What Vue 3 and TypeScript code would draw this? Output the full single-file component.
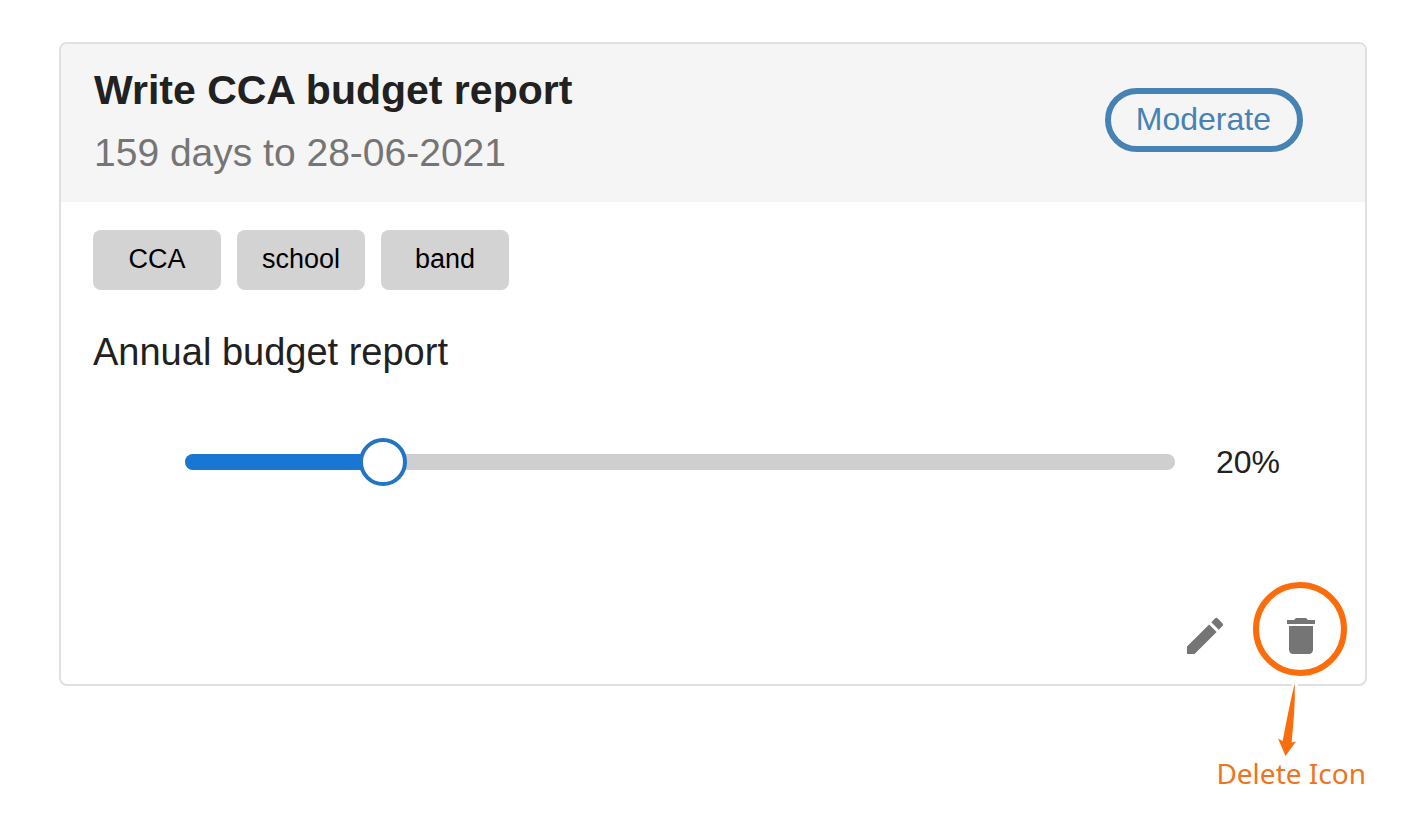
<script setup lang="ts">
import { computed, ref } from 'vue'

interface Task {
  title: string
  daysLeft: number
  dueDate: string
  priority: string
  tags: string[]
  description: string
}

const task: Task = {
  title: 'Write CCA budget report',
  daysLeft: 159,
  dueDate: '28-06-2021',
  priority: 'Moderate',
  tags: ['CCA', 'school', 'band'],
  description: 'Annual budget report',
}

const progress = ref<number>(20)
const fillWidth = computed(() => `${progress.value}%`)
</script>

<template>
  <main class="page">
    <article class="card">
      <header class="card-header">
        <div class="heading">
          <h1 class="title">{{ task.title }}</h1>
          <p class="due">{{ task.daysLeft }} days to {{ task.dueDate }}</p>
        </div>
        <span class="priority">{{ task.priority }}</span>
      </header>

      <div class="card-body">
        <ul class="tags">
          <li v-for="tag in task.tags" :key="tag" class="tag">{{ tag }}</li>
        </ul>
        <p class="description">{{ task.description }}</p>
        <div class="progress">
          <div class="slider">
            <div class="rail"><div class="fill" :style="{ width: fillWidth }"></div></div>
            <input
              id="progress"
              v-model.number="progress"
              class="range"
              type="range"
              min="0"
              max="100"
              aria-label="Progress"
            />
          </div>
          <output class="value" for="progress">{{ progress }}%</output>
        </div>
      </div>

      <footer class="card-actions">
        <button class="icon-button" type="button" aria-label="Edit">
          <svg class="icon" viewBox="0 0 24 24" aria-hidden="true">
            <path d="M3 17.25V21h3.75L17.81 9.94l-3.75-3.75L3 17.25zM20.71 7.04c.39-.39.39-1.02 0-1.41l-2.34-2.34a.9959.9959 0 0 0-1.41 0l-1.83 1.83 3.75 3.75 1.83-1.83z" />
          </svg>
        </button>
        <div class="delete">
          <button class="icon-button" type="button" aria-label="Delete">
            <svg class="icon" viewBox="0 0 24 24" aria-hidden="true">
              <path d="M6 19c0 1.1.9 2 2 2h8c1.1 0 2-.9 2-2V7H6v12zM19 4h-3.5l-1-1h-5l-1 1H5v2h14V4z" />
            </svg>
          </button>
          <div class="callout">
            <div class="ring"></div>
            <svg class="arrow" viewBox="0 0 30 80" aria-hidden="true">
              <path class="halo" d="M22 1H28V8H22Z" />
              <path d="M24.700 2C20 22 16 42 12.700 60L8 57.500L15.500 75L26 60.500L21.600 61.500C23.500 42 25.500 22 24.700 2Z" />
            </svg>
            <span class="callout-label">Delete Icon</span>
          </div>
        </div>
      </footer>
    </article>
  </main>
</template>

<style>
body {
  margin: 0;
  background: #fff;
}
</style>

<style scoped>
.page {
  box-sizing: border-box;
  min-height: 100vh;
  padding: 42px 47px 32px 59px;
  font-family: "Liberation Sans", Arial, Helvetica, sans-serif;
  color: #212121;
}

.card {
  border: 2px solid #e0e0e0;
  border-radius: 8px;
  background: #fff;
}

.card-header {
  display: flex;
  align-items: flex-start;
  justify-content: space-between;
  padding: 14px 62px 18px 33px;
  border-radius: 6px 6px 0 0;
  background: #f5f5f5;
}

.title {
  margin: 0;
  font-size: 41px;
  font-weight: 700;
  line-height: 64px;
}

.due {
  margin: 0;
  font-size: 39px;
  line-height: 62px;
  color: #757575;
}

.priority {
  margin-top: 30px;
  padding: 0 26px 2px 25px;
  border: 6px solid #4682b4;
  border-radius: 32px;
  font-size: 32px;
  line-height: 50px;
  color: #4682b4;
}

.card-body {
  padding: 28px 32px 0;
}

.tags {
  display: flex;
  flex-wrap: wrap;
  gap: 16px;
  margin: 0;
  padding: 0;
  list-style: none;
}

.tag {
  min-width: 128px;
  height: 60px;
  border-radius: 8px;
  background: #d3d3d3;
  font-size: 27px;
  line-height: 58px;
  text-align: center;
  color: #000;
}

.description {
  margin: 32px 0 56px;
  font-size: 38px;
  line-height: 60px;
}

.progress {
  display: flex;
  align-items: center;
  gap: 40px;
  padding: 0 52px 0 92px;
}

.slider {
  position: relative;
  display: flex;
  flex: 1;
  align-items: center;
  height: 48px;
}

.rail {
  flex: 1;
  height: 16px;
  border-radius: 8px;
  background: #cfcfcf;
}

.fill {
  height: 100%;
  border-radius: 8px;
  background: #1976d2;
}

.range {
  position: absolute;
  inset: 0 -24px;
  height: 48px;
  margin: 0;
  background: transparent;
  appearance: none;
  cursor: pointer;
}

.range::-webkit-slider-thumb {
  box-sizing: border-box;
  width: 48px;
  height: 48px;
  border: 4px solid #2474c4;
  border-radius: 50%;
  background: #fff;
  appearance: none;
}

.value {
  flex: none;
  min-width: 66px;
  font-size: 32px;
  line-height: 48px;
  text-align: center;
}

.card-actions {
  display: flex;
  justify-content: flex-end;
  margin-top: 102px;
  padding-right: 16px;
}

.icon-button {
  display: block;
  padding: 24px;
  border: 0;
  background: transparent;
  cursor: pointer;
}

.icon {
  display: block;
  width: 48px;
  height: 48px;
  fill: #757575;
}

.delete {
  position: relative;
}

.callout {
  position: absolute;
  top: -6px;
  right: -17px;
  display: flex;
  flex-direction: column;
  align-items: flex-end;
  pointer-events: none;
}

.ring {
  box-sizing: border-box;
  width: 94px;
  height: 94px;
  margin-right: 19px;
  border: 6px solid #fb6d0b;
  border-radius: 50%;
}

.arrow {
  width: 30px;
  height: 80px;
  margin: 5px 66px 0 0;
  fill: #fb6d0b;
}

.halo {
  fill: #fff;
}

.callout-label {
  font-family: "Noto Sans", Verdana, sans-serif;
  font-size: 28px;
  line-height: 24px;
  white-space: nowrap;
  color: #ee7420;
}
</style>
